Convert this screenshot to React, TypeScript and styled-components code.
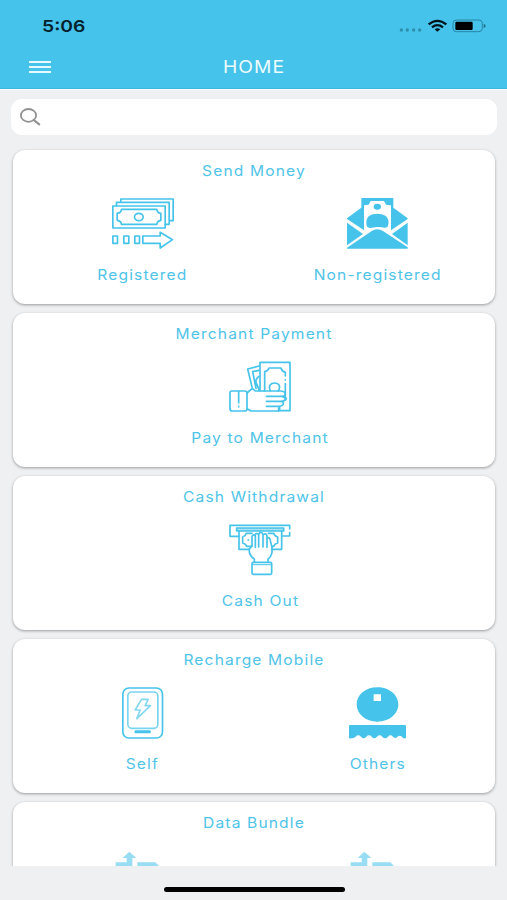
import React from "react";
import styled, { createGlobalStyle } from "styled-components";

const blue = "#45c3ea";

const GlobalStyle = createGlobalStyle`
  * { box-sizing: border-box; }
  body { margin: 0; background: #eff0f2; font-family: Inter, "Liberation Sans", sans-serif; }
`;

const Screen = styled.div`
  width: 507px;
  height: 900px;
  display: flex;
  flex-direction: column;
  overflow: hidden;
  background: #eff0f2;
`;

const Header = styled.header`
  height: 89px;
  flex: none;
  background: ${blue};
  border-bottom: 1px solid #3bb6df;
  box-shadow: 0 1px 0 #fafcfd;
`;

const StatusBar = styled.div`
  height: 45px;
  padding: 6px 19px 0 42px;
  display: flex;
  align-items: center;
  justify-content: space-between;
`;

const Time = styled.span`
  font-size: 16.5px;
  font-weight: 600;
  line-height: 20px;
  color: #06222c;
  transform: scaleX(1.17);
  transform-origin: left;
`;

const StatusIcons = styled.svg`
  width: 90px;
  height: 18px;
`;

const NavBar = styled.div`
  height: 44px;
  padding: 0 28px 0 29px;
  display: grid;
  grid-template-columns: 22px 1fr 22px;
  align-items: center;
`;

const MenuButton = styled.button`
  padding: 0;
  border: 0;
  background: none;
  display: flex;
  flex-direction: column;
  gap: 2.5px;
`;

const MenuLine = styled.span`
  width: 22px;
  height: 2.6px;
  background: #e6fbff;
`;

const Heading = styled.h1`
  margin: 0;
  font-size: 17.5px;
  font-weight: 400;
  line-height: 22px;
  letter-spacing: 0.9px;
  text-align: center;
  color: #eefbff;
  transform: scaleX(1.1);
`;

const SearchBar = styled.label`
  flex: none;
  height: 36px;
  margin: 10px 10px 0 11px;
  padding-left: 8px;
  border-radius: 11px;
  background: #fff;
  display: flex;
  align-items: center;
`;

const SearchIcon = styled.svg`
  width: 23px;
  height: 20px;
`;

const SearchInput = styled.input`
  flex: 1;
  border: 0;
  outline: 0;
  background: none;
  font: inherit;
`;

const CardList = styled.main`
  height: 731px;
  flex: none;
  padding: 15px 12px 0 13px;
  display: flex;
  flex-direction: column;
  gap: 9px;
  overflow: hidden;
`;

const Card = styled.section`
  flex: none;
  height: 154px;
  border-radius: 12px;
  background: #fff;
  box-shadow: 0 1px 3px rgba(0, 0, 0, 0.36);
  padding-top: 10px;
`;

const Text = styled.span`
  display: block;
  text-align: center;
  white-space: nowrap;
  font-size: 14.3px;
  line-height: 21px;
  letter-spacing: 1.05px;
  color: #4fc4e8;
  transform: scaleX(1.09);
`;

const Actions = styled.div`
  display: flex;
  padding-left: 12px;
  margin-top: 17px;
`;

const Action = styled.div`
  flex: 1;
  display: flex;
  flex-direction: column;
  align-items: center;
  gap: 14px;
`;

const Icon = styled.svg<{ $faded?: boolean }>`
  width: 64px;
  height: 52px;
  overflow: visible;
  fill: none;
  stroke: ${blue};
  stroke-width: 5;
  stroke-linejoin: round;
  stroke-linecap: round;
  opacity: ${(p) => (p.$faded ? 0.55 : 1)};
`;

const HomeFooter = styled.footer`
  flex: 1;
  display: flex;
  justify-content: center;
  padding: 21px 0 0 1px;
`;

const HomeIndicator = styled.div`
  width: 181px;
  height: 5px;
  border-radius: 3px;
  background: #000;
`;

const Banknotes = () => (
  <Icon viewBox="92.5 129 192 156">
    <path d="M122 142V132H279V197H267M109 152V142H267V208H255" />
    <rect x="98" y="153" width="157" height="66" />
    <path d="M124 163H230Q231 173 242 175V196Q231 198 230 208H124Q123 198 111 196V175Q123 173 124 163Z" />
    <ellipse cx="176" cy="186" rx="13" ry="11" />
    <path d="M98 243H112V265H98ZM131 243H146V265H131ZM164 243H178V265H164ZM188 243H240V232L277 254L240 279V265H188Z" />
  </Icon>
);

const Envelope = () => (
  <Icon viewBox="138 129 192 156">
    <g fill={blue} stroke="none">
      <path d="M184 129H280V158L323 190V192L273 226V151L258 149L252 138H212L206 149L192 151V226L141 192V190L184 158Z" />
      <ellipse cx="232" cy="155" rx="11" ry="9" />
      <path d="M202 216C197 205 198 190 208 182C220 174 243 174 256 182C267 190 268 205 262 216C253 221 247 216 232 216C218 216 212 222 202 216Z" />
      <path d="M141 203L189 237L141 271ZM323 203L276 237L323 271Z" />
      <path d="M141 281V278L214 229Q232 217 250 229L323 277V281Z" />
    </g>
  </Icon>
);

const HandWithCash = () => (
  <Icon viewBox="189 123 192 156">
    <rect x="195" y="213" width="51" height="60" rx="6" />
    <path d="M221 215V248M221 259V261M246 219L262 205L271 213H297M246 266L259 273H340M262 205L248 147L282 138M282 151L263 155L273 205M282 169Q271 176 273 187L283 211" />
    <path d="M285 212V127H375V272H341V264" />
    <path d="M299 212V155Q309 153 312 144H348Q350 154 361 157V168M361 179V180M361 191V234" />
    <path d="M316 212C309 197 317 189 329 189C342 189 348 198 340 213" />
    <path d="M297 213H349Q360 214 361 222Q362 229 350 229H304M350 229Q362 231 360 239Q358 244 349 244H304M349 244Q358 248 354 254Q351 259 342 259H304M342 259Q347 267 340 273M361 233Q366 236 361 240" />
  </Icon>
);

const CashMachine = () => (
  <Icon viewBox="189 117 192 156">
    <path d="M222 154H195V121H374V132M374 143V153H350" />
    <rect x="215" y="129" width="141" height="9" fill="#a7e1f4" />
    <path d="M222 139V193H253M350 139V193H320M244 145Q241 154 233 156V174Q242 176 245 184H261M261 145H244M310 145H326Q329 154 338 156V174Q329 176 326 184H320M249 165H251" />
    <path d="M261 183V154Q266 145 271 154V187M271 154V148Q276 142 281 150V186M281 148Q287 135 294 148V186M294 151Q301 142 306 152V187M306 159Q315 155 316 167L321 187V202Q317 218 309 222V231M261 182L253 192V202Q257 216 268 222V231" />
    <rect x="261" y="232" width="59" height="36" rx="4" />
    <path d="M263 239H318" strokeWidth="3" />
  </Icon>
);

const PhoneCharge = () => (
  <Icon viewBox="92.5 111 192 156">
    <rect x="128" y="114" width="119" height="150" rx="18" />
    <rect x="143" y="126" width="90" height="109" rx="12" strokeOpacity=".72" />
    <path d="M184 148H204L195 167H211L170 206L180 180H165Z" strokeOpacity=".65" />
    <path d="M167 245H208" strokeWidth="9" />
  </Icon>
);

const Others = () => (
  <Icon viewBox="78 51 192 156">
    <g fill={blue} stroke="none">
      <path fillRule="evenodd" d="M172 52C208 52 235 75 235 103C235 132 208 155 172 155C136 155 110 132 110 103C110 75 136 52 172 52ZM161 73V93H183V73Z" />
      <path d="M90 165H255Q258 165 258 168V205H250Q243 193 234 199Q227 209 219 200Q211 192 204 200Q195 210 187 200Q179 192 171 200Q163 210 155 200Q147 192 139 200Q131 210 123 200Q114 192 107 200Q102 206 87 205V168Q87 165 90 165Z" />
    </g>
  </Icon>
);

const DataArrows = () => (
  <Icon viewBox="333 180 192 156" $faded>
    <g fill={blue} stroke="none">
      <path d="M388 185L409 204H397V240H347V217H380V204H368ZM412 217H466L475 226V240H412Z" />
    </g>
  </Icon>
);

type Item = { label: string; icon: React.ReactNode };
const sections: { title: string; items: Item[] }[] = [
  {
    title: "Send Money",
    items: [
      { label: "Registered", icon: <Banknotes /> },
      { label: "Non-registered", icon: <Envelope /> },
    ],
  },
  { title: "Merchant Payment", items: [{ label: "Pay to Merchant", icon: <HandWithCash /> }] },
  { title: "Cash Withdrawal", items: [{ label: "Cash Out", icon: <CashMachine /> }] },
  {
    title: "Recharge Mobile",
    items: [
      { label: "Self", icon: <PhoneCharge /> },
      { label: "Others", icon: <Others /> },
    ],
  },
  {
    title: "Data Bundle",
    items: [
      { label: "", icon: <DataArrows /> },
      { label: "", icon: <DataArrows /> },
    ],
  },
];

export default function App() {
  return (
    <Screen>
      <GlobalStyle />
      <Header>
        <StatusBar>
          <Time>5:06</Time>
          <StatusIcons viewBox="437 51 270 54">
            <g fill="#2d8eae">
              <circle cx="447" cy="90" r="5" />
              <circle cx="465" cy="90" r="5" />
              <circle cx="484" cy="90" r="5" />
              <circle cx="502" cy="90" r="5" />
            </g>
            <g fill="none" stroke="#03151c" strokeWidth="7">
              <path d="M529 73Q555 52 582 73M539 82Q555 69 572 82" />
            </g>
            <path d="M547 88Q555 82 564 88L555 95Z" fill="#03151c" />
            <rect x="602" y="60" width="88" height="35" rx="10" fill="none" stroke="#2786a6" strokeWidth="3" />
            <rect x="609" y="65" width="52" height="25" rx="4" fill="#000" />
            <path d="M694 71Q700 74 700 78Q700 82 694 84Z" fill="#236f89" />
          </StatusIcons>
        </StatusBar>
        <NavBar>
          <MenuButton aria-label="Menu">
            <MenuLine />
            <MenuLine />
            <MenuLine />
          </MenuButton>
          <Heading>HOME</Heading>
        </NavBar>
      </Header>
      <SearchBar>
        <SearchIcon viewBox="0 0 23 20" fill="none" stroke="#929292" strokeWidth="1.8" strokeLinecap="round">
          <ellipse cx="9.5" cy="8.4" rx="7.6" ry="6.4" />
          <path d="M14.8 13L20.2 17.4" strokeWidth="2.2" />
        </SearchIcon>
        <SearchInput aria-label="Search" />
      </SearchBar>
      <CardList>
        {sections.map((section) => (
          <Card key={section.title}>
            <Text>{section.title}</Text>
            <Actions>
              {section.items.map((item, i) => (
                <Action key={i}>
                  {item.icon}
                  <Text>{item.label}</Text>
                </Action>
              ))}
            </Actions>
          </Card>
        ))}
      </CardList>
      <HomeFooter>
        <HomeIndicator />
      </HomeFooter>
    </Screen>
  );
}
